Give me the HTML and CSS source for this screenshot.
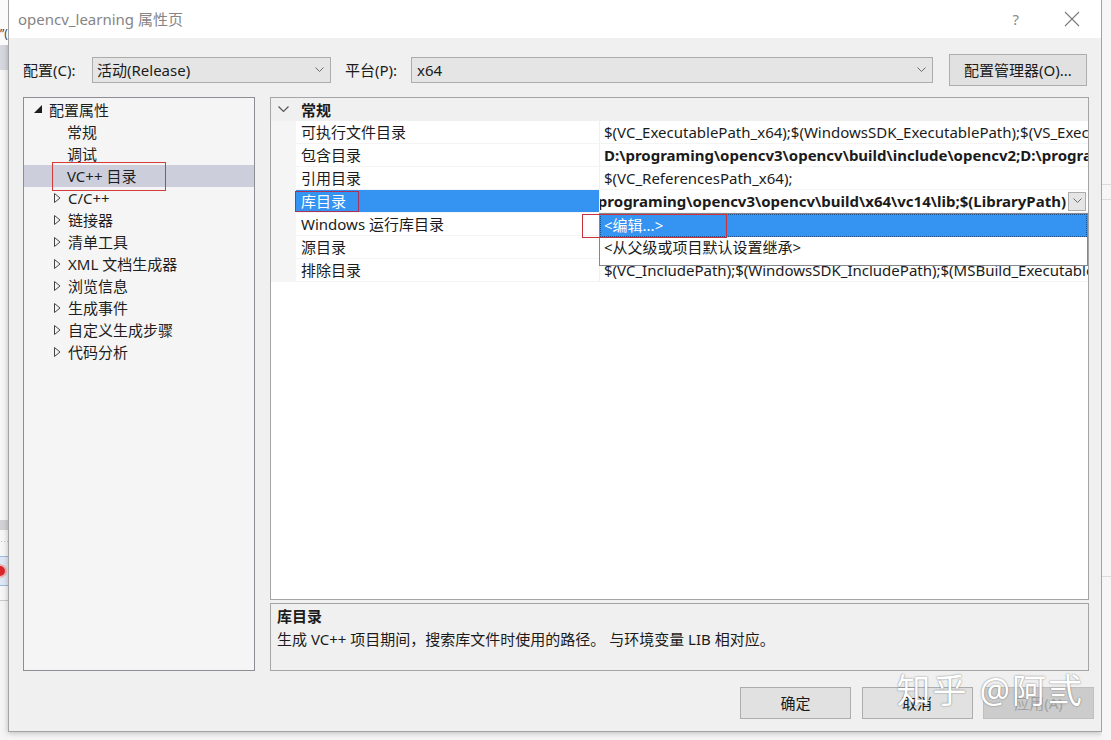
FILE: index.html
```html
<!DOCTYPE html>
<html lang="zh-CN">
<head>
    <meta charset="UTF-8">
    <title>opencv_learning 属性页</title>
    <link rel="stylesheet" href="styles.css">
</head>
<body>
<div class="screen">
    <!-- window behind the dialog, left side -->
    <div class="bg-left">
        <div class="bl-top"><span class="bl-quote">”(</span></div>
        <div class="bl-band"></div>
        <div class="bl-fill"></div>
        <div class="bl-band2"></div>
        <div class="bl-dots"></div>
        <div class="bl-error"><span class="bl-icon"></span></div>
        <div class="bl-gap"></div>
        <div class="bl-rest"></div>
    </div>

    <div class="dialog">
        <div class="titlebar">
            <span class="title">opencv_learning 属性页</span>
            <span class="tb-help">?</span>
            <svg class="tb-close" width="16" height="16" viewBox="0 0 16 16">
                <path d="M1 1 L15 15 M15 1 L1 15" stroke="#7a7a7a" stroke-width="1.1" fill="none"/>
            </svg>
        </div>

        <div class="dialog-body">
            <div class="config-row">
                <span class="cfg-label">配置(C):</span>
                <div class="combo combo-config">
                    <span>活动(Release)</span>
                    <svg class="chev" width="9" height="6" viewBox="0 0 9 6"><path d="M0.5 0.5 L4.5 4.5 L8.5 0.5" stroke="#6a6a6a" fill="none"/></svg>
                </div>
                <span class="cfg-label platform-label">平台(P):</span>
                <div class="combo combo-platform">
                    <span>x64</span>
                    <svg class="chev" width="9" height="6" viewBox="0 0 9 6"><path d="M0.5 0.5 L4.5 4.5 L8.5 0.5" stroke="#6a6a6a" fill="none"/></svg>
                </div>
                <button class="btn btn-manager">配置管理器(O)...</button>
            </div>

            <div class="main">
                <div class="tree">
                    <div class="tree-row root">
                        <svg class="exp" width="14" height="10" viewBox="0 0 14 10"><path d="M9 1 L9 9 L1 9 Z" fill="#1e1e1e"/></svg>
                        <span>配置属性</span>
                    </div>
                    <div class="tree-row leaf"><span>常规</span></div>
                    <div class="tree-row leaf"><span>调试</span></div>
                    <div class="tree-row leaf selected"><span>VC++ 目录</span><span class="mark mark-tree"></span></div>
                    <div class="tree-row child">
                        <svg class="exp" width="14" height="12" viewBox="0 0 14 12"><path d="M2.5 1.5 L8 6 L2.5 10.5 Z" stroke="#444" fill="none"/></svg>
                        <span>C/C++</span>
                    </div>
                    <div class="tree-row child">
                        <svg class="exp" width="14" height="12" viewBox="0 0 14 12"><path d="M2.5 1.5 L8 6 L2.5 10.5 Z" stroke="#444" fill="none"/></svg>
                        <span>链接器</span>
                    </div>
                    <div class="tree-row child">
                        <svg class="exp" width="14" height="12" viewBox="0 0 14 12"><path d="M2.5 1.5 L8 6 L2.5 10.5 Z" stroke="#444" fill="none"/></svg>
                        <span>清单工具</span>
                    </div>
                    <div class="tree-row child">
                        <svg class="exp" width="14" height="12" viewBox="0 0 14 12"><path d="M2.5 1.5 L8 6 L2.5 10.5 Z" stroke="#444" fill="none"/></svg>
                        <span>XML 文档生成器</span>
                    </div>
                    <div class="tree-row child">
                        <svg class="exp" width="14" height="12" viewBox="0 0 14 12"><path d="M2.5 1.5 L8 6 L2.5 10.5 Z" stroke="#444" fill="none"/></svg>
                        <span>浏览信息</span>
                    </div>
                    <div class="tree-row child">
                        <svg class="exp" width="14" height="12" viewBox="0 0 14 12"><path d="M2.5 1.5 L8 6 L2.5 10.5 Z" stroke="#444" fill="none"/></svg>
                        <span>生成事件</span>
                    </div>
                    <div class="tree-row child">
                        <svg class="exp" width="14" height="12" viewBox="0 0 14 12"><path d="M2.5 1.5 L8 6 L2.5 10.5 Z" stroke="#444" fill="none"/></svg>
                        <span>自定义生成步骤</span>
                    </div>
                    <div class="tree-row child">
                        <svg class="exp" width="14" height="12" viewBox="0 0 14 12"><path d="M2.5 1.5 L8 6 L2.5 10.5 Z" stroke="#444" fill="none"/></svg>
                        <span>代码分析</span>
                    </div>
                </div>

                <div class="right-col">
                    <div class="grid">
                        <div class="grid-row category">
                            <div class="gutter">
                                <svg width="11" height="7" viewBox="0 0 11 7"><path d="M0.5 0.5 L5.5 5.5 L10.5 0.5" stroke="#555" stroke-width="1.2" fill="none"/></svg>
                            </div>
                            <div class="cat-name">常规</div>
                        </div>
                        <div class="grid-row">
                            <div class="gutter"></div>
                            <div class="name">可执行文件目录</div>
                            <div class="value">$(VC_ExecutablePath_x64);$(WindowsSDK_ExecutablePath);$(VS_ExecutablePath);$(MSBuild_ExecutablePath);$(FxCopDir);$(PATH);</div>
                        </div>
                        <div class="grid-row">
                            <div class="gutter"></div>
                            <div class="name">包含目录</div>
                            <div class="value bold">D:\programing\opencv3\opencv\build\include\opencv2;D:\programing\opencv3\opencv\build\include;$(IncludePath)</div>
                        </div>
                        <div class="grid-row">
                            <div class="gutter"></div>
                            <div class="name">引用目录</div>
                            <div class="value">$(VC_ReferencesPath_x64);</div>
                        </div>
                        <div class="grid-row active">
                            <div class="gutter"></div>
                            <div class="name">库目录<span class="mark mark-name"></span></div>
                            <div class="value bold edit">
                                <span class="edit-text">D:\programing\opencv3\opencv\build\x64\vc14\lib;$(LibraryPath)</span>
                                <span class="drop-btn">
                                    <svg width="9" height="6" viewBox="0 0 9 6"><path d="M0.5 0.5 L4.5 4.5 L8.5 0.5" stroke="#6a6a6a" fill="none"/></svg>
                                </span>
                            </div>
                        </div>
                        <div class="grid-row">
                            <div class="gutter"></div>
                            <div class="name">Windows 运行库目录</div>
                            <div class="value"></div>
                        </div>
                        <div class="grid-row">
                            <div class="gutter"></div>
                            <div class="name">源目录</div>
                            <div class="value"></div>
                        </div>
                        <div class="grid-row">
                            <div class="gutter"></div>
                            <div class="name">排除目录</div>
                            <div class="value">$(VC_IncludePath);$(WindowsSDK_IncludePath);$(MSBuild_ExecutablePath);$(VC_LibraryPath_x64);</div>
                        </div>

                        <!-- open drop-down of the 库目录 value -->
                        <div class="dropdown">
                            <div class="dd-item current">&lt;编辑...&gt;</div>
                            <div class="dd-item">&lt;从父级或项目默认设置继承&gt;</div>
                        </div>
                        <span class="mark mark-edit"></span>
                    </div>

                    <div class="desc">
                        <div class="desc-title">库目录</div>
                        <div class="desc-text">生成 VC++ 项目期间，搜索库文件时使用的路径。 与环境变量 LIB 相对应。</div>
                    </div>
                </div>
            </div>

            <div class="footer">
                <button class="btn btn-foot">确定</button>
                <button class="btn btn-foot">取消</button>
                <button class="btn btn-foot disabled">应用(A)</button>
                <span class="watermark">知乎 @阿弎</span>
            </div>
        </div>
    </div>

    <!-- window behind the dialog, right side -->
    <div class="bg-right">
        <div class="br-a"></div>
        <div class="br-line"></div>
        <div class="br-b"></div>
        <div class="br-line"></div>
        <div class="br-c"></div>
        <div class="br-line"></div>
    </div>
</div>
</body>
</html>
```

FILE: styles.css
```css
* {
    box-sizing: border-box;
    margin: 0;
    padding: 0;
}

body {
    font-family: "Noto Sans", "Noto Sans CJK SC", sans-serif;
    font-size: 15px;
    color: #1b1b1b;
    background-color: #f6f6f6;
}

.screen {
    display: flex;
    width: 1111px;
    height: 740px;
    overflow: hidden;
    background-color: #f6f6f6;
}

/* ---------- background window bits ---------- */
.bg-left {
    width: 8px;
    height: 740px;
    display: flex;
    flex-direction: column;
    flex-shrink: 0;
    background-color: #f7f7f7;
}

.bl-top {
    height: 45px;
    background-color: #fbfbfb;
    position: relative;
    overflow: hidden;
}

.bl-quote {
    position: absolute;
    left: 0;
    top: 27px;
    font-size: 12px;
    color: #444;
    line-height: 14px;
}

.bl-band {
    height: 25px;
    background-color: #d7d7df;
}

.bl-fill {
    height: 450px;
    background-color: #f7f7f7;
}

.bl-band2 {
    height: 10px;
    background-color: #d2d2d6;
}

.bl-dots {
    height: 26px;
    background-image: radial-gradient(circle, #c0c0c0 1px, transparent 1px);
    background-size: 3px 3px;
    background-position: 0 10px;
    background-repeat: repeat-x;
}

.bl-error {
    height: 30px;
    background-color: #dfe9f6;
    border-top: 1px solid #9fbbe0;
    border-bottom: 1px solid #9fbbe0;
    display: flex;
    align-items: center;
}

.bl-icon {
    display: block;
    width: 14px;
    height: 14px;
    margin-left: -7px;
    border-radius: 50%;
    background-color: #d8262b;
    border: 2px solid #f1b4b4;
}

.bl-gap {
    height: 15px;
    border-bottom: 1px solid #c8c8c8;
}

.bl-rest {
    flex: 1;
    background-color: #f5f5f5;
}

.bg-right {
    width: 9px;
    height: 740px;
    flex-shrink: 0;
    display: flex;
    flex-direction: column;
    background-color: #f6f6f6;
}

.br-a {
    height: 184px;
}

.br-b {
    height: 14px;
}

.br-c {
    height: 376px;
}

.br-line {
    height: 1px;
    background-color: #dcdcdc;
}

/* ---------- dialog ---------- */
.dialog {
    width: 1094px;
    height: 732px;
    flex-shrink: 0;
    border: 1px solid #a3a3a3;
    border-top: none;
    background-color: #f0f0f0;
    box-shadow: 0 1px 6px rgba(0, 0, 0, 0.25);
    display: flex;
    flex-direction: column;
}

.titlebar {
    height: 38px;
    background-color: #ffffff;
    display: flex;
    align-items: center;
    padding-left: 9px;
}

.title {
    flex: 1;
    font-size: 15px;
    color: #858585;
    line-height: 20px;
}

.tb-help {
    font-size: 15px;
    color: #8a8a8a;
    margin-right: 45px;
    line-height: 20px;
}

.tb-close {
    margin-right: 21px;
}

.dialog-body {
    flex: 1;
    padding: 16px 12px 0 14px;
    display: flex;
    flex-direction: column;
}

/* ---------- configuration row ---------- */
.config-row {
    display: flex;
    align-items: center;
    height: 32px;
}

.cfg-label {
    width: 69px;
    line-height: 20px;
}

.platform-label {
    width: 66px;
    margin-left: 14px;
}

.combo {
    height: 26px;
    background-color: #e5e5e5;
    border: 1px solid #acacac;
    display: flex;
    align-items: center;
    justify-content: space-between;
    padding: 0 6px 0 4px;
    line-height: 20px;
}

.combo-config {
    width: 239px;
}

.combo-platform {
    width: 522px;
    padding-left: 5px;
}

.btn {
    font-family: "Noto Sans", "Noto Sans CJK SC", sans-serif;
    font-size: 15px;
    color: #1b1b1b;
    background-color: #e1e1e1;
    border: 1px solid #adadad;
    line-height: 20px;
}

.btn-manager {
    width: 138px;
    height: 32px;
    margin-left: 16px;
}

/* ---------- main area ---------- */
.main {
    display: flex;
    margin-top: 11px;
    height: 574px;
}

.tree {
    width: 232px;
    background-color: #f5f5f5;
    border: 1px solid #8c8e94;
    padding-top: 1px;
}

.tree-row {
    height: 22px;
    display: flex;
    align-items: center;
    line-height: 20px;
    position: relative;
    color: #1e1e1e;
}

.tree-row .exp {
    flex-shrink: 0;
    margin-right: 2px;
}

.root {
    padding-left: 9px;
}

.root .exp {
    margin-right: 2px;
    margin-top: -2px;
}

.leaf {
    padding-left: 43px;
}

.child {
    padding-left: 28px;
}

.tree-row.selected {
    background-color: #cccedb;
}

.mark {
    position: absolute;
    border: 1px solid #d33a3a;
    pointer-events: none;
}

.mark-tree {
    left: 28px;
    top: -3px;
    width: 114px;
    height: 29px;
}

.right-col {
    margin-left: 15px;
    width: 819px;
    display: flex;
    flex-direction: column;
}

/* ---------- property grid ---------- */
.grid {
    height: 503px;
    background-color: #ffffff;
    border: 1px solid #a5a5a5;
    position: relative;
    overflow: hidden;
}

.grid-row {
    display: flex;
    height: 23px;
    line-height: 20px;
}

.gutter {
    width: 25px;
    flex-shrink: 0;
    background-color: #f5f5f5;
    display: flex;
    align-items: center;
    justify-content: center;
}

.category {
    background-color: #f0f0f0;
}

.category .gutter {
    background-color: #f0f0f0;
}

.cat-name {
    font-weight: bold;
    padding-left: 5px;
    display: flex;
    align-items: center;
}

.name {
    width: 304px;
    flex-shrink: 0;
    padding-left: 5px;
    border-right: 1px solid #f0f0f0;
    border-bottom: 1px solid #f4f4f4;
    display: flex;
    align-items: center;
    position: relative;
    white-space: nowrap;
}

.value {
    flex: 1;
    min-width: 0;
    padding-left: 4px;
    border-bottom: 1px solid #f4f4f4;
    white-space: nowrap;
    overflow: hidden;
    display: flex;
    align-items: center;
}

.value.bold {
    font-weight: bold;
}

.active .name {
    background-color: #3593f2;
    color: #ffffff;
}

.mark-name {
    left: -1px;
    top: 1px;
    width: 64px;
    height: 21px;
    border-color: #a8325a;
}

.value.edit {
    justify-content: flex-end;
    padding-left: 0;
    padding-right: 2px;
}

.edit-text {
    flex-shrink: 0;
    padding-right: 2px;
}

.drop-btn {
    flex-shrink: 0;
    width: 18px;
    height: 19px;
    background-color: #e5e5e5;
    border: 1px solid #acacac;
    display: flex;
    align-items: center;
    justify-content: center;
}

.dropdown {
    position: absolute;
    left: 328px;
    top: 115px;
    width: 489px;
    height: 53px;
    background-color: #ffffff;
    border: 1px solid #828790;
}

.dd-item {
    height: 23px;
    padding-left: 4px;
    line-height: 21px;
    white-space: nowrap;
}

.dd-item.current {
    background-color: #3593f2;
    color: #ffffff;
    border: 1px dotted #1d4f8a;
    padding-left: 3px;
}

.mark-edit {
    left: 311px;
    top: 116px;
    width: 145px;
    height: 24px;
    border-color: #c8323c;
}

/* ---------- description ---------- */
.desc {
    margin-top: 3px;
    height: 68px;
    background-color: #f0f0f0;
    border: 1px solid #a5a5a5;
    padding: 1px 6px;
    line-height: 22px;
}

.desc-title {
    font-weight: bold;
}

.desc-text {
    margin-top: 1px;
}

/* ---------- footer buttons ---------- */
.footer {
    display: flex;
    justify-content: flex-end;
    padding-top: 16px;
    margin-right: -5px;
    position: relative;
}

.btn-foot {
    width: 111px;
    height: 32px;
    margin-left: 10.5px;
}

.btn-foot.disabled {
    background-color: #cccccc;
    border-color: #bfbfbf;
    color: #a2a2a2;
}

.watermark {
    position: absolute;
    right: 10px;
    top: -3px;
    font-size: 34px;
    line-height: 44px;
    color: #ffffff;
    letter-spacing: 2px;
    text-shadow: 0 0 2px rgba(0, 0, 0, 0.35), 0 0 1px rgba(0, 0, 0, 0.3);
    pointer-events: none;
}
```
